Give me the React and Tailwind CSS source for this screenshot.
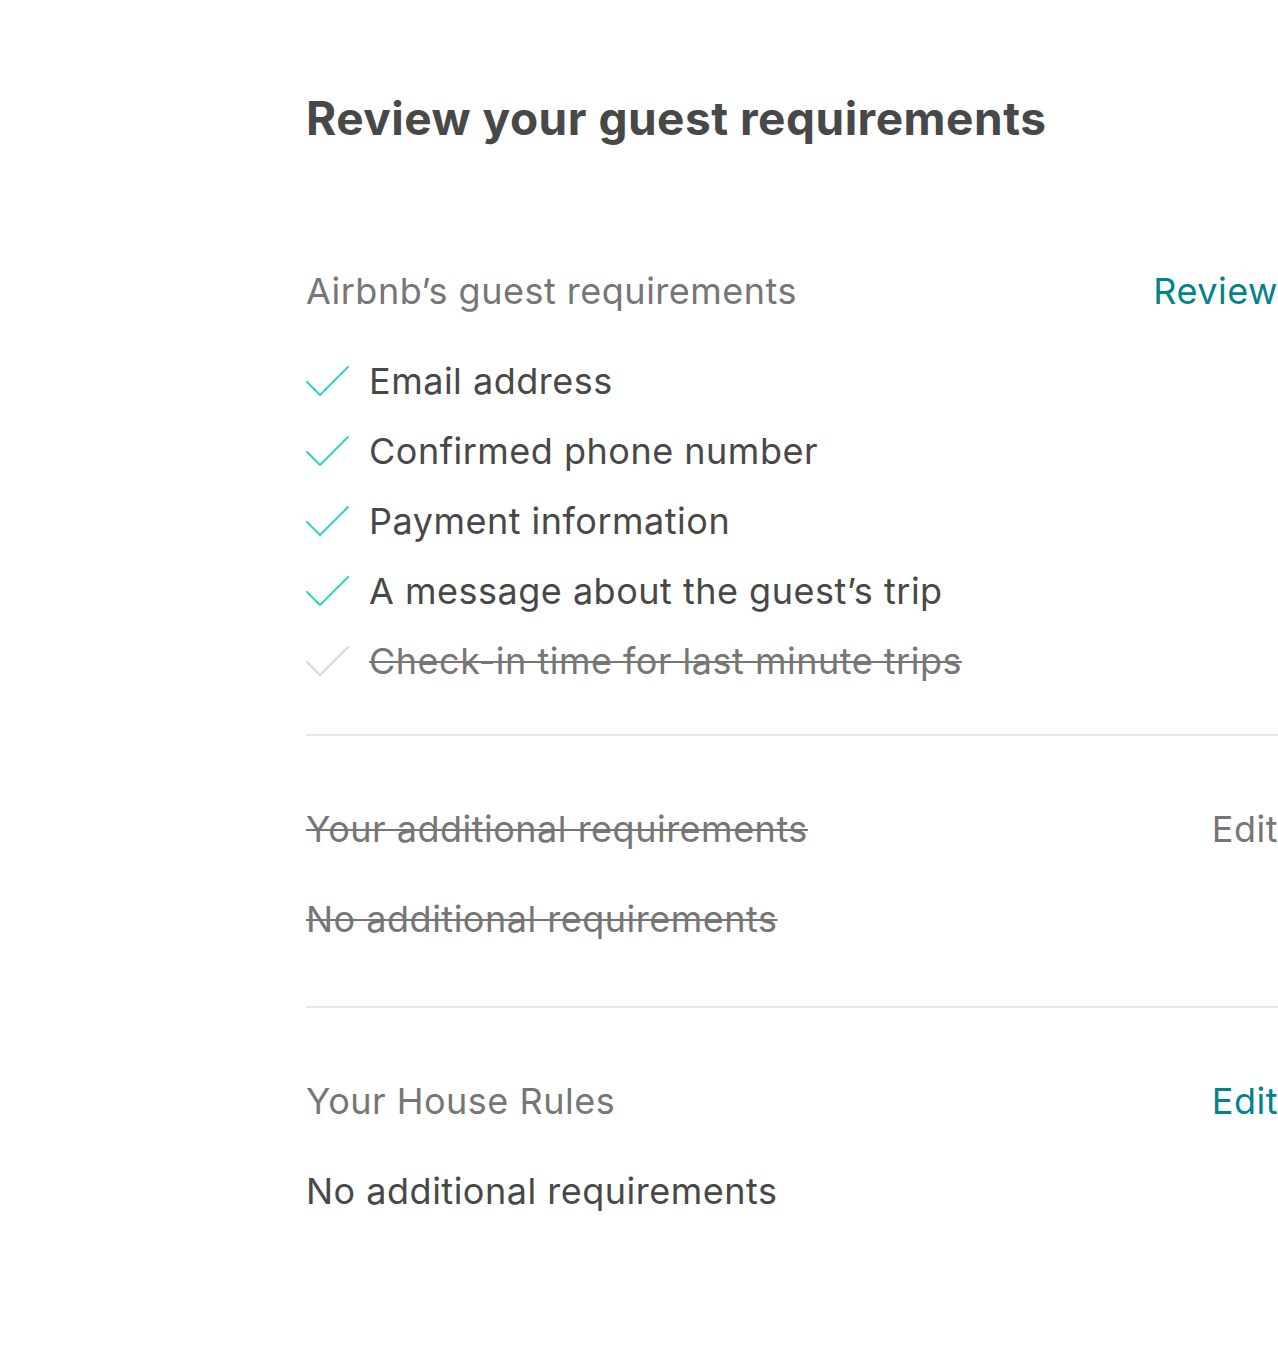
import React from 'react';

const font = { fontFamily: 'Inter, "Open Sans", sans-serif' };

function Check({ muted }) {
  return (
    <svg width="44" height="32" viewBox="0 0 44 32" fill="none" className="shrink-0">
      <path
        d="M1 17 L14 30 L42 2"
        stroke={muted ? '#d8d8d8' : '#2fd3c7'}
        strokeWidth="2"
        strokeLinecap="round"
        strokeLinejoin="round"
      />
    </svg>
  );
}

const requirements = [
  { label: 'Email address' },
  { label: 'Confirmed phone number' },
  { label: 'Payment information' },
  { label: 'A message about the guest’s trip' },
  { label: 'Check-in time for last minute trips', off: true },
];

export default function App() {
  return (
    <div className="min-h-screen bg-white overflow-hidden" style={font}>
      <div className="pl-[306px] pt-[88px] w-[1278px]">
        <h1 className="text-[46px] leading-[60px] font-bold text-[#484848] tracking-[0.5px]">
          Review your guest requirements
        </h1>

        <section className="mt-[118px]">
          <div className="flex justify-between items-center h-[50px]">
            <span className="text-[36px] tracking-[0.5px] text-[#767676]">Airbnb’s guest requirements</span>
            <button className="text-[36px] tracking-[0.5px] text-[#008489]">Review</button>
          </div>
          <ul className="mt-[30px]">
            {requirements.map((r) => (
              <li key={r.label} className="flex items-center h-[70px] gap-[19px]">
                <Check muted={r.off} />
                <span
                  className={
                    r.off
                      ? 'text-[36px] tracking-[0.5px] text-[#767676] line-through decoration-2'
                      : 'text-[36px] tracking-[0.5px] text-[#484848]'
                  }
                >
                  {r.label}
                </span>
              </li>
            ))}
          </ul>
          <div className="mt-[38px] border-t-2 border-[#e4e7e7]" />
        </section>

        <section className="mt-[68px]">
          <div className="flex justify-between items-center h-[50px]">
            <span className="text-[36px] tracking-[0.5px] text-[#767676] line-through decoration-2">
              Your additional requirements
            </span>
            <button className="text-[36px] tracking-[0.5px] text-[#767676]">Edit</button>
          </div>
          <p className="mt-[40px] h-[50px] flex items-center text-[36px] tracking-[0.5px] text-[#767676] line-through decoration-2">
            No additional requirements
          </p>
          <div className="mt-[62px] border-t-2 border-[#e4e7e7]" />
        </section>

        <section className="mt-[68px]">
          <div className="flex justify-between items-center h-[50px]">
            <span className="text-[36px] tracking-[0.5px] text-[#767676]">Your House Rules</span>
            <button className="text-[36px] tracking-[0.5px] text-[#008489]">Edit</button>
          </div>
          <p className="mt-[40px] h-[50px] flex items-center text-[36px] tracking-[0.5px] text-[#484848]">
            No additional requirements
          </p>
        </section>
      </div>
    </div>
  );
}
